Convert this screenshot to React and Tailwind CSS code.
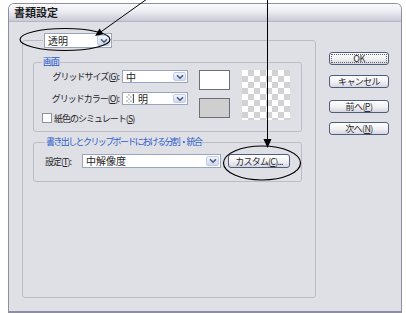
import React from 'react';

function Chevron() {
  return (
    <svg width="8" height="6" viewBox="0 0 8 6">
      <path d="M1 1.2 L4 4.2 L7 1.2" fill="none" stroke="#4a5a7c" strokeWidth="1.6" />
    </svg>
  );
}

function Combo({ className = '', children }) {
  return (
    <div className={'flex items-stretch bg-white border border-[#9aa5bd] ' + className}>
      <div className="flex-1 flex items-center pl-[3px] text-[10px] leading-none">{children}</div>
      <div className="w-[13px] m-[1px] flex items-center justify-center rounded-[2px] border border-[#c3cde6] bg-gradient-to-b from-[#f4f6fd] to-[#cfd8ef]">
        <Chevron />
      </div>
    </div>
  );
}

function Btn({ children, focus = false }) {
  return (
    <div className="h-[13px] w-[60px] rounded-[3px] border border-[#4f5c7c] bg-gradient-to-b from-white via-[#f2f2f6] to-[#d6d6e2] flex items-center justify-center p-[1px]">
      <div
        className={
          'w-full h-full flex items-center justify-center text-[9px] tracking-[-0.6px] leading-none text-[#2a2a2a] ' +
          (focus ? 'border border-dotted border-[#666]' : '')
        }
      >
        {children}
      </div>
    </div>
  );
}

function Key({ children }) {
  return <span className="underline">{children}</span>;
}

export default function App() {
  return (
    <div className="relative w-[406px] h-[313px] bg-white overflow-hidden text-[#262626] font-['Noto_Sans_CJK_JP','Noto_Sans',sans-serif]">
      <div className="ml-[8px] mt-[3px] w-[394px] h-[310px] flex flex-col rounded-t-[6px] border border-b-2 border-[#8e8ea0] bg-[#dfdfe6] overflow-hidden">
        <div className="h-[18px] shrink-0 flex items-center pl-[5px] border-b border-[#b4b4c4] bg-gradient-to-b from-[#fbfbfd] via-[#e9e9f1] to-[#c9c9d7] text-[11px] font-bold leading-none text-[#1a1a1a]">
          書類設定
        </div>

        <div className="flex flex-1 pl-[13px] pr-[12px] pt-[11px] pb-[13px]">
          <fieldset className="w-[294px] border border-[#bcbcc7] rounded-[3px] px-[10px]">
            <legend className="ml-[10px] px-[1px]">
              <Combo className="w-[68px] h-[15px]">透明</Combo>
            </legend>

            <fieldset className="mt-[8px] w-[269px] border border-[#bcbcc7] rounded-[3px] pb-[8px]">
              <legend className="ml-[8px] px-[1px] text-[9px] tracking-[-1px] leading-[12px] text-[#2456c8]">画面</legend>
              <div className="flex pt-[2px]">
                <div className="w-[154px] flex flex-col">
                  <div className="flex items-center justify-end">
                    <span className="text-[9px] tracking-[-1px] leading-none">
                      グリッドサイズ(<Key>G</Key>):
                    </span>
                    <Combo className="ml-[3px] w-[66px] h-[13px]">中</Combo>
                  </div>
                  <div className="mt-[9px] flex items-center justify-end">
                    <span className="text-[9px] tracking-[-1px] leading-none">
                      グリッドカラー(<Key>O</Key>):
                    </span>
                    <Combo className="ml-[3px] w-[66px] h-[13px]">
                      <span className="w-[8px] h-[9px] mr-[4px] border-r border-[#555] [background-image:repeating-conic-gradient(#d0d0d0_0_25%,#ffffff_0_50%)] [background-size:4px_4px]" />
                      明
                    </Combo>
                  </div>
                  <div className="mt-[8px] pl-[8px] flex items-center">
                    <span className="w-[10px] h-[10px] bg-white border border-[#8a93a8]" />
                    <span className="ml-[2px] text-[9px] tracking-[-1px] leading-none">
                      紙色のシミュレート(<Key>S</Key>)
                    </span>
                  </div>
                </div>
                <div className="ml-[11px] flex flex-col">
                  <div className="w-[31px] h-[20px] bg-white border border-[#6e6e78]" />
                  <div className="mt-[8px] w-[31px] h-[20px] bg-[#cfcfd0] border border-[#6e6e78]" />
                </div>
                <div className="ml-[12px] w-[48px] h-[50px] [background-image:repeating-conic-gradient(#d2d2d4_0_25%,#ffffff_0_50%)] [background-size:12px_12px]" />
              </div>
            </fieldset>

            <fieldset className="mt-[4px] w-[269px] border border-[#bcbcc7] rounded-[3px] pb-[13px]">
              <legend className="ml-[11px] px-[1px] text-[9px] tracking-[-1.6px] leading-[12px] text-[#2d5ec8]">
                書き出しとクリップボードにおける分割・統合
              </legend>
              <div className="flex items-center pt-[6px] pl-[11px]">
                <span className="w-[37px] text-[9px] tracking-[-1px] leading-none">
                  設定(<Key>T</Key>):
                </span>
                <Combo className="w-[139px] h-[14px]">中解像度</Combo>
                <div className="ml-[7px]">
                  <div className="h-[14px] w-[62px] rounded-[3px] border border-[#4f5c7c] bg-gradient-to-b from-white via-[#f2f2f6] to-[#d6d6e2] flex items-center justify-center text-[9px] tracking-[-0.8px] leading-none text-[#2a2a2a]">
                    カスタム(<Key>C</Key>)...
                  </div>
                </div>
              </div>
            </fieldset>
          </fieldset>

          <div className="ml-[13px] mt-[19px] flex flex-col">
            <Btn focus>OK</Btn>
            <div className="mt-[10px]">
              <Btn>キャンセル</Btn>
            </div>
            <div className="mt-[12px]">
              <Btn>
                前へ(<Key>P</Key>)
              </Btn>
            </div>
            <div className="mt-[9px]">
              <Btn>
                次へ(<Key>N</Key>)
              </Btn>
            </div>
          </div>
        </div>
      </div>

      <svg className="absolute inset-0 pointer-events-none" width="406" height="313" viewBox="0 0 406 313">
        <ellipse cx="65" cy="39.5" rx="45" ry="11" fill="none" stroke="#000" strokeWidth="1.2" />
        <line x1="147" y1="-1" x2="100" y2="32.5" stroke="#000" strokeWidth="1" />
        <polygon points="95,36 103.5,34.3 99.5,28.5" fill="#000" />
        <line x1="267.5" y1="0" x2="267.5" y2="140" stroke="#000" strokeWidth="1" />
        <polygon points="267.5,148 263.5,139 271.5,139" fill="#000" />
        <ellipse cx="262" cy="163" rx="38.5" ry="17" fill="none" stroke="#000" strokeWidth="1.2" />
      </svg>
    </div>
  );
}
